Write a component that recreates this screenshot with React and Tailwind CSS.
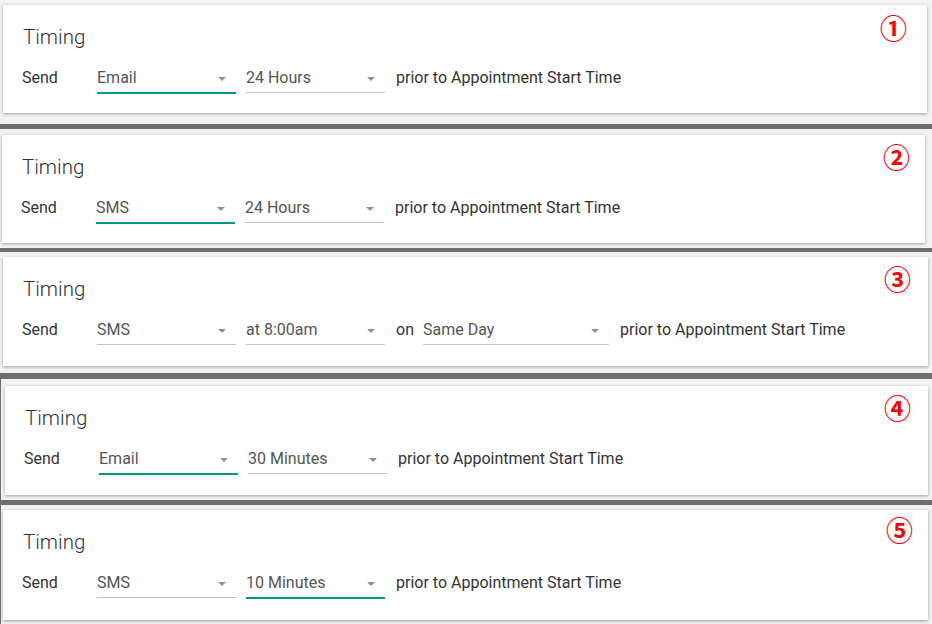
import React from "react";

function Select({ value, width, active }) {
  return (
    <div className={`flex flex-col ${width}`}>
      <div className="flex h-[30px] items-center justify-between pt-[2px] pr-[10px]">
        <span className="text-[16px] text-[#555555]">{value}</span>
        <span className="mt-[1px] h-0 w-0 border-l-[4px] border-r-[4px] border-t-[4px] border-l-transparent border-r-transparent border-t-[#8f8f8f]" />
      </div>
      {active ? (
        <div className="h-[2px] bg-[#009688]" />
      ) : (
        <div className="h-[2px] border-t border-[#c2c2c2]" />
      )}
    </div>
  );
}

function Card({ cardClass, circleClass, circle, children }) {
  return (
    <div className={`relative bg-white shadow-[0_1px_3px_rgba(0,0,0,0.35)] pl-[19px] pt-[18px] ${cardClass}`}>
      <div className="ml-[1px] text-[20.5px] font-light leading-[28px] text-[#333333]">Timing</div>
      <div className="mt-[11px] flex items-start text-[16px] text-[#333333]">{children}</div>
      <span className={`absolute font-bold text-[27px] leading-none text-[#ff0000] ${circleClass}`} style={{ fontFamily: '"Noto Sans CJK JP", sans-serif' }}>
        {circle}
      </span>
    </div>
  );
}

function Row({ a, b, aActive, bActive, extra }) {
  return (
    <>
      <div className="flex h-[30px] w-[75px] items-center pt-[2px]">Send</div>
      <Select value={a} width="w-[139px]" active={aActive} />
      <div className="w-[10px]" />
      <Select value={b} width="w-[139px]" active={bActive} />
      {extra}
      <div className="ml-[11px] flex h-[30px] items-center pt-[2px]">prior to Appointment Start Time</div>
    </>
  );
}

export default function App() {
  return (
    <div className="w-[932px] h-[624px] overflow-hidden bg-[#f1f2f2] leading-normal" style={{ fontFamily: "Roboto, sans-serif" }}>
      {/* Strip 1 */}
      <div className="h-[124px] pt-[5px] pl-[3px] pr-[5px]">
        <Card cardClass="h-[108px]" circleClass="left-[877px] top-[9px]" circle="①">
          <Row a="Email" b="24 Hours" aActive />
        </Card>
      </div>
      <div className="h-[5px] bg-[#6e6e6e]" />
      {/* Strip 2 */}
      <div className="h-[119px] pt-[6px] pl-[2px] pr-[7px]">
        <Card cardClass="h-[108px]" circleClass="left-[881px] top-[8px]" circle="②">
          <Row a="SMS" b="24 Hours" aActive />
        </Card>
      </div>
      <div className="h-[4px] bg-[#6e6e6e]" />
      {/* Strip 3 */}
      <div className="h-[121px] pt-[5px] pl-[3px] pr-[4px]">
        <Card cardClass="h-[109px]" circleClass="left-[881px] top-[8px]" circle="③">
          <Row
            a="SMS"
            b="at 8:00am"
            extra={
              <>
                <div className="ml-[11px] flex h-[30px] w-[27px] items-center pt-[2px]">on</div>
                <Select value="Same Day" width="w-[186px]" />
              </>
            }
          />
        </Card>
      </div>
      <div className="h-[6px] bg-[#6e6e6e]" />
      {/* Strip 4 */}
      <div className="h-[121px] border-l border-[#6e6e6e] pt-[7px] pl-[4px] pr-[4px]">
        <Card cardClass="h-[109px]" circleClass="left-[879px] top-[8px]" circle="④">
          <Row a="Email" b="30 Minutes" aActive />
        </Card>
      </div>
      <div className="h-[5px] bg-[#6e6e6e]" />
      {/* Strip 5 */}
      <div className="h-[119px] border-l border-[#6e6e6e] pt-[5px] pl-[2px] pr-[4px]">
        <Card cardClass="h-[110px]" circleClass="left-[883px] top-[6px]" circle="⑤">
          <Row a="SMS" b="10 Minutes" bActive />
        </Card>
      </div>
    </div>
  );
}
